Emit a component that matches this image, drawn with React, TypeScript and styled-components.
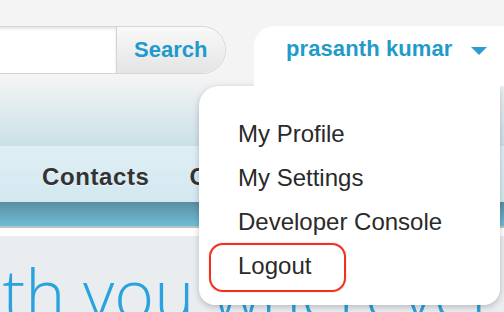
import React from "react";
import styled, { createGlobalStyle } from "styled-components";

const GlobalStyle = createGlobalStyle`
  html, body {
    margin: 0;
    padding: 0;
    background: #f4f4f4;
  }
  body {
    width: 504px;
    height: 312px;
    overflow: hidden;
    font-family: "Liberation Sans", Arial, Helvetica, sans-serif;
  }
`;

const Page = styled.div`
  width: 504px;
  height: 312px;
  overflow: hidden;
  display: flex;
  flex-direction: column;
`;

const Masthead = styled.header`
  flex: none;
  height: 146px;
  box-sizing: border-box;
  padding-top: 26px;
  display: flex;
  align-items: flex-start;
  background: linear-gradient(to bottom, #f4f4f4 0, #f4f4f4 76px, #cbe0e8 146px);
`;

const SearchBox = styled.form`
  flex: none;
  display: flex;
  height: 48px;
  margin: 0 0 0 -45px;
  box-sizing: border-box;
  border: 1px solid #d6d6d6;
  border-radius: 0 24px 24px 0;
  background: #fff;
  overflow: hidden;
`;

const SearchInput = styled.input`
  width: 160px;
  border: 0;
  outline: 0;
  margin: 0;
  padding: 0 10px;
  box-sizing: border-box;
  background: #fff;
  box-shadow: inset 0 2px 3px rgba(0, 0, 0, 0.1);
`;

const SearchButton = styled.button`
  width: 109px;
  margin: 0;
  padding: 0 0 0 17px;
  border: 0;
  border-left: 1px solid #d3d3d3;
  border-radius: 0 23px 23px 0;
  text-align: left;
  background: linear-gradient(to bottom, #f9f9f9, #e4e4e4);
  font-family: "Liberation Sans", Arial, Helvetica, sans-serif;
  font-weight: bold;
  font-size: 22px;
  color: #1f9bcb;
  cursor: pointer;
`;

const UserMenu = styled.div`
  position: relative;
  z-index: 10;
  flex: 1;
  margin-left: 28px;
`;

const UserTab = styled.div`
  position: relative;
  z-index: 2;
  height: 60px;
  box-sizing: border-box;
  padding: 9px 0 0 32px;
  display: flex;
  align-items: flex-start;
  gap: 19px;
  background: #fff;
  border-radius: 20px 0 0 0;
`;

const UserName = styled.span`
  font-weight: bold;
  font-size: 22px;
  line-height: 28px;
  letter-spacing: 0.1px;
  color: #1f9bcb;
  white-space: nowrap;
`;

const Caret = styled.span`
  margin-top: 12px;
  width: 0;
  height: 0;
  border-left: 8px solid transparent;
  border-right: 8px solid transparent;
  border-top: 8px solid #2a9fcf;
`;

const Dropdown = styled.ul`
  position: absolute;
  z-index: 1;
  top: 60px;
  left: -55px;
  width: 301px;
  height: 219px;
  margin: 0;
  padding: 26px 0 0 39px;
  box-sizing: border-box;
  list-style: none;
  background: #fff;
  border-radius: 20px 0 16px 16px;
  box-shadow: 0 2px 6px rgba(0, 0, 0, 0.22);
`;

const MenuItem = styled.li<{ $marked?: boolean }>`
  position: relative;
  font-size: 24px;
  line-height: 44px;
  color: #2a2a2a;
  white-space: nowrap;

  ${(p) =>
    p.$marked &&
    `
    &::after {
      content: "";
      position: absolute;
      left: -29px;
      top: -1px;
      width: 137px;
      height: 49px;
      box-sizing: border-box;
      border: 2px solid #f3301e;
      border-radius: 14px;
      box-shadow: 0 0 1px rgba(243, 48, 30, 0.7);
    }
  `}
`;

const NavBar = styled.nav`
  flex: none;
  height: 56px;
  box-sizing: border-box;
  padding: 19px 0 0 42px;
  display: flex;
  gap: 40px;
  background: linear-gradient(to bottom, #e0eff5, #d3e8f0);
`;

const NavItem = styled.a`
  font-weight: bold;
  font-size: 24px;
  line-height: 24px;
  letter-spacing: 0.6px;
  color: #333;
  text-shadow: 0 1px 0 rgba(255, 255, 255, 0.6);
  white-space: nowrap;
`;

const Band = styled.div`
  flex: none;
  height: 24px;
  background: linear-gradient(to bottom, #5a8ea0, #70bcd8);
  border-bottom: 2px solid #b9c3c6;
`;

const Strip = styled.div`
  flex: none;
  height: 8px;
  background: #fff;
`;

const Content = styled.main`
  flex: 1;
  overflow: hidden;
  box-sizing: border-box;
  padding-top: 23px;
  background: #eaedf0;
`;

const Headline = styled.h1`
  margin: 0 0 0 -62px;
  font-family: "Open Sans", "Liberation Sans", sans-serif;
  font-weight: 300;
  font-size: 68px;
  line-height: 68px;
  color: #2aa2dd;
  white-space: nowrap;
`;

export default function App() {
  return (
    <Page>
      <GlobalStyle />
      <Masthead>
        <SearchBox onSubmit={(e) => e.preventDefault()}>
          <SearchInput type="text" aria-label="Search" />
          <SearchButton type="submit">Search</SearchButton>
        </SearchBox>
        <UserMenu>
          <UserTab>
            <UserName>prasanth kumar</UserName>
            <Caret />
          </UserTab>
          <Dropdown>
            <MenuItem>My Profile</MenuItem>
            <MenuItem>My Settings</MenuItem>
            <MenuItem>Developer Console</MenuItem>
            <MenuItem $marked>Logout</MenuItem>
          </Dropdown>
        </UserMenu>
      </Masthead>
      <NavBar>
        <NavItem>Contacts</NavItem>
        <NavItem>Chatter</NavItem>
      </NavBar>
      <Band />
      <Strip />
      <Content>
        <Headline>with you wherever</Headline>
      </Content>
    </Page>
  );
}
